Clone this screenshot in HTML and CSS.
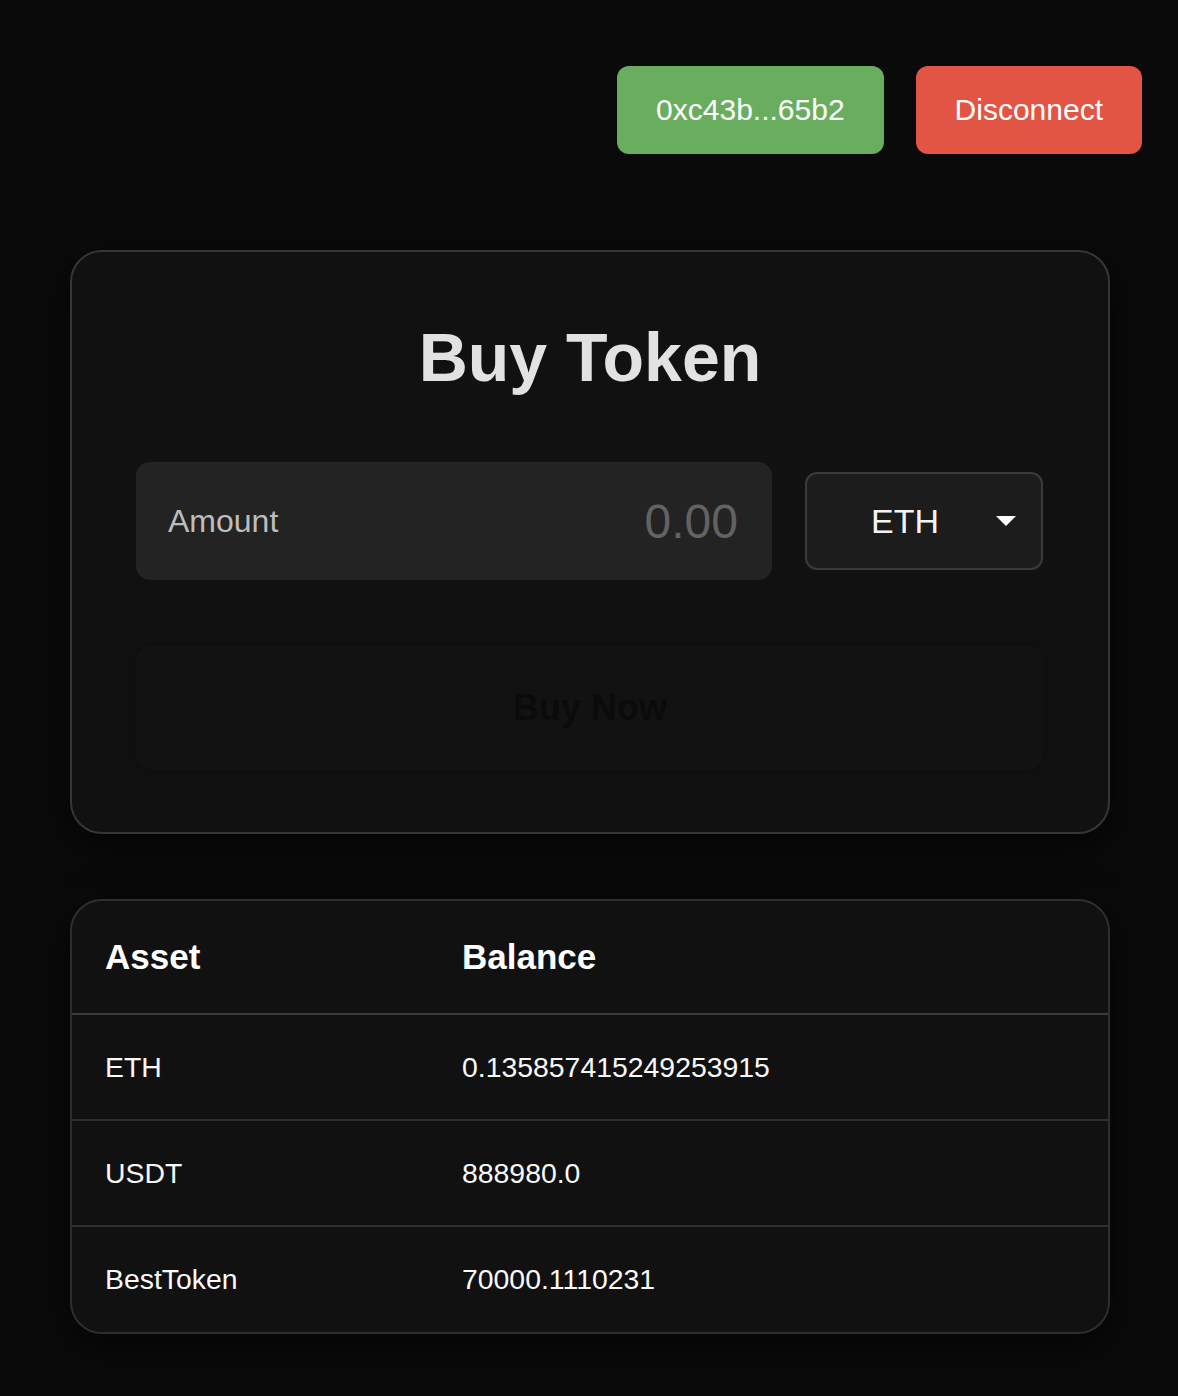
FILE: index.html
```html
<!DOCTYPE html>
<html lang="en">
<head>
<meta charset="utf-8">
<title>Buy Token</title>
<link rel="stylesheet" href="styles.css">
</head>
<body>
<header class="topbar">
  <button class="btn btn-address">0xc43b...65b2</button>
  <button class="btn btn-disconnect">Disconnect</button>
</header>
<main class="main">
  <section class="card buy-card">
    <h1 class="title">Buy Token</h1>
    <div class="form-row">
      <label class="amount">
        <span class="amount-label">Amount</span>
        <input class="amount-input" type="text" size="1" placeholder="0.00">
      </label>
      <div class="select">
        <span class="select-value">ETH</span>
        <svg class="select-caret" width="20" height="10" viewBox="0 0 20 10"><polygon points="0,0 20,0 10,10" fill="#fff"/></svg>
      </div>
    </div>
    <button class="buy-btn">Buy Now</button>
  </section>
  <section class="card table-card">
    <table class="balances">
      <colgroup><col class="col-asset"><col></colgroup>
      <thead>
        <tr><th>Asset</th><th>Balance</th></tr>
      </thead>
      <tbody>
        <tr><td>ETH</td><td>0.135857415249253915</td></tr>
        <tr><td>USDT</td><td>888980.0</td></tr>
        <tr><td>BestToken</td><td>70000.1110231</td></tr>
      </tbody>
    </table>
  </section>
</main>
</body>
</html>
```

FILE: styles.css
```css
* { box-sizing: border-box; }
html, body {
  margin: 0;
  background: #0a0a0a;
  font-family: "Liberation Sans", Arial, Helvetica, sans-serif;
  color: #fff;
}
body { min-height: 1396px; }

.topbar {
  display: flex;
  justify-content: flex-end;
  gap: 32px;
  padding: 66px 36px 0 0;
}
.btn {
  font-family: inherit;
  font-size: 30px;
  line-height: 34px;
  padding: 27px 39px;
  border: none;
  border-radius: 12px;
  color: #fff;
  cursor: pointer;
}
.btn-address { background: #69ae5f; }
.btn-disconnect { background: #e25443; }

.main {
  width: 1040px;
  margin: 96px 0 0 70px;
}
.card {
  background: #111111;
  border: 2px solid #363636;
  border-radius: 32px;
  box-shadow: 0 12px 36px rgba(0, 0, 0, 0.55);
}
.buy-card {
  padding: 66px 64px 62px;
}
.title {
  margin: 0 0 66px;
  text-align: center;
  font-size: 68px;
  line-height: 78px;
  font-weight: 700;
  color: #e2e2e2;
}
.form-row {
  display: flex;
  align-items: center;
  gap: 33px;
  margin-bottom: 65px;
}
.amount {
  width: 636px;
  min-width: 0;
  flex: 0 0 auto;
  height: 118px;
  display: flex;
  align-items: center;
  padding: 0 34px 0 32px;
  background: #232323;
  border-radius: 14px;
}
.amount-label {
  font-size: 32px;
  color: #bdbdbd;
  white-space: nowrap;
}
.amount-input {
  flex: 1 1 0;
  width: 0;
  min-width: 0;
  background: transparent;
  border: none;
  outline: none;
  padding: 0;
  text-align: right;
  font-family: inherit;
  font-size: 48px;
  color: #ddd;
}
.amount-input::placeholder { color: #626262; }
.select {
  width: 238px;
  min-width: 0;
  flex: 0 0 auto;
  height: 98px;
  display: flex;
  align-items: center;
  justify-content: space-between;
  padding: 0 25px 0 64px;
  background: #1c1c1c;
  border: 2px solid #3a3a3a;
  border-radius: 12px;
}
.select-value {
  font-size: 34px;
  color: #f4f4f4;
}
.select-caret { display: block; }

.buy-btn {
  display: block;
  width: 100%;
  height: 125px;
  border: none;
  border-radius: 16px;
  background: #121212;
  box-shadow: 0 0 10px rgba(0, 0, 0, 0.25);
  font-family: inherit;
  font-size: 36px;
  font-weight: 700;
  color: #0b0b0b;
}

.table-card {
  margin-top: 65px;
  overflow: hidden;
  border-color: #2e2e2e;
}
.balances {
  width: 100%;
  border-collapse: collapse;
  table-layout: fixed;
}
.col-asset { width: 357px; }
.balances th,
.balances td {
  text-align: left;
  padding: 0 33px;
  white-space: nowrap;
}
.balances th {
  height: 113px;
  font-size: 35px;
  font-weight: 700;
  color: #fff;
}
.balances td {
  height: 106px;
  font-size: 28.4px;
  color: #fafafa;
}
.balances thead tr { border-bottom: 2px solid #3a3a3a; }
.balances tbody tr + tr { border-top: 2px solid #2f2f2f; }
```
